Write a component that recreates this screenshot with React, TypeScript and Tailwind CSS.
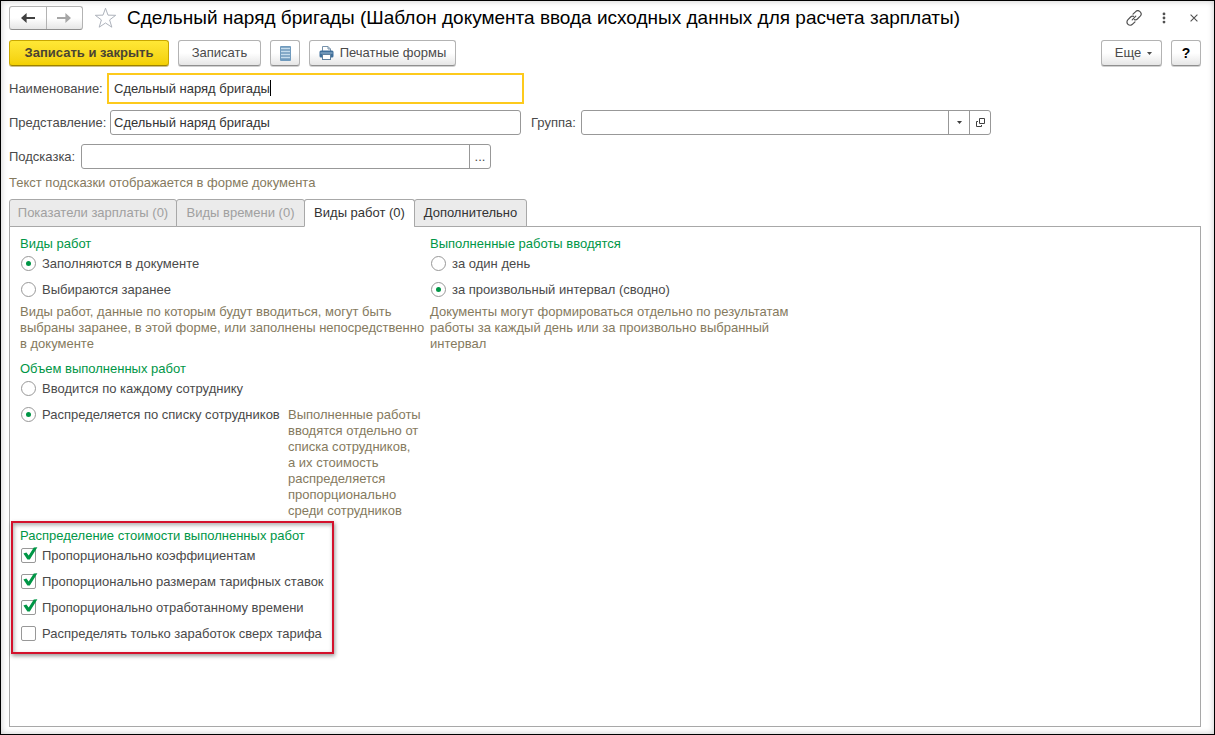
import { useState } from 'react'
import type { ReactNode } from 'react'
import clsx from 'clsx'

const buttonBase =
  'flex items-center justify-center rounded-[3px] border border-[#b3b3b3] border-b-[#8f8f8f] bg-linear-to-b from-white from-50% to-[#e6e6e6] shadow-[0_1px_0_#d0d0d0]'

interface ToolButtonProps {
  children: ReactNode
  className?: string
  label?: string
}

const ToolButton = ({ children, className, label }: ToolButtonProps) => (
  <button type="button" aria-label={label} className={clsx(buttonBase, 'h-[26px]', className)}>
    {children}
  </button>
)

interface ChoiceProps {
  label: string
  checked: boolean
  onChange: () => void
  name?: string
}

const RadioItem = ({ label, checked, onChange, name }: ChoiceProps) => (
  <label className="flex h-4 items-start gap-[6px] pl-px whitespace-nowrap">
    <span className="relative flex h-[15px] w-[15px] shrink-0">
      <input
        type="radio"
        name={name}
        checked={checked}
        onChange={onChange}
        className="h-[15px] w-[15px] appearance-none rounded-full border border-[#989898] bg-white"
      />
      {checked && <span className="pointer-events-none absolute inset-[5px] rounded-full bg-[#009646]" />}
    </span>
    {label}
  </label>
)

const CheckItem = ({ label, checked, onChange }: ChoiceProps) => (
  <label className="flex h-4 items-start gap-[6px] pl-px whitespace-nowrap">
    <span className="relative flex h-[15px] w-[15px] shrink-0">
      <input
        type="checkbox"
        checked={checked}
        onChange={onChange}
        className="h-[15px] w-[15px] appearance-none rounded-[2px] border border-[#989898] bg-white"
      />
      {checked && (
        <svg viewBox="0 0 17 16" className="pointer-events-none absolute -top-px left-0 h-4 w-[17px]">
          <path d="M2.4 6.6 L5.4 5.4 L7.7 8.6 L12.8 .6 L16.4 .2 L8.8 12.4 L6.4 12.4 Z" fill="#009646" />
        </svg>
      )}
    </span>
    {label}
  </label>
)

const GroupTitle = ({ children }: { children: ReactNode }) => (
  <legend className="mb-1 block h-4 whitespace-nowrap text-[#009646]">{children}</legend>
)

const tabs = [
  { id: 'salary', title: 'Показатели зарплаты (0)', width: 'w-[168px]', disabled: true },
  { id: 'time', title: 'Виды времени (0)', width: 'w-[129px]', disabled: true },
  { id: 'works', title: 'Виды работ (0)', width: 'w-[111px]', disabled: false },
  { id: 'extra', title: 'Дополнительно', width: 'w-[113px]', disabled: false },
]

const initialShares = [
  { label: 'Пропорционально коэффициентам', checked: true },
  { label: 'Пропорционально размерам тарифных ставок', checked: true },
  { label: 'Пропорционально отработанному времени', checked: true },
  { label: 'Распределять только заработок сверх тарифа', checked: false },
]

const App = () => {
  const [name, setName] = useState('Сдельный наряд бригады')
  const [view, setView] = useState('Сдельный наряд бригады')
  const [group, setGroup] = useState('')
  const [hint, setHint] = useState('')
  const [tab, setTab] = useState('works')
  const [source, setSource] = useState(0)
  const [period, setPeriod] = useState(1)
  const [volume, setVolume] = useState(1)
  const [shares, setShares] = useState(initialShares)

  const toggleShare = (index: number) => {
    setShares(shares.map((s, i) => (i === index ? { ...s, checked: !s.checked } : s)))
  }

  return (
    <div className="flex min-h-screen flex-col border border-black bg-white pt-[5px] pr-[13px] pb-[7px] pl-2 font-['Liberation_Sans',Arial,sans-serif] text-[13px] leading-4 text-[#4a4a4a] shadow-[inset_0_0_6px_#c8c8c8]">
      <header className="flex h-6 items-center">
        <div className="flex h-6 w-[74px] shrink-0 rounded-[3px] border border-[#b3b3b3] border-b-[#8f8f8f] bg-linear-to-b from-white from-50% to-[#e6e6e6]">
          <button type="button" aria-label="Назад" className="flex flex-1 items-center justify-center border-r border-[#b3b3b3]">
            <svg viewBox="0 0 14 10" className="h-[10px] w-[14px]">
              <path d="M0 5 L5.6 0 V3.9 H14 V6.1 H5.6 V10 Z" fill="#404040" />
            </svg>
          </button>
          <button type="button" aria-label="Вперед" className="flex flex-1 items-center justify-center">
            <svg viewBox="0 0 14 10" className="h-[10px] w-[14px]">
              <path d="M14 5 L8.4 0 V3.9 H0 V6.1 H8.4 V10 Z" fill="#a6a6a6" />
            </svg>
          </button>
        </div>
        <button type="button" aria-label="В избранное" className="ml-[11px]">
          <svg viewBox="0 0 24 24" className="h-6 w-[23px]" fill="none" stroke="#a9afb8" strokeWidth="1">
            <path d="M12 1.8 L14.6 9 L22.6 9.2 L16.3 14 L18.6 21.6 L12 17.2 L5.4 21.6 L7.7 14 L1.4 9.2 L9.4 9 Z" />
          </svg>
        </button>
        <h1 className="ml-[10px] flex-1 text-[19px] leading-6 whitespace-nowrap text-black">
          Сдельный наряд бригады (Шаблон документа ввода исходных данных для расчета зарплаты)
        </h1>
        <div className="flex items-center">
          <button type="button" aria-label="Ссылка">
            <svg viewBox="0 0 16 16" className="h-4 w-4" fill="none" stroke="#505050" strokeWidth="1.2" strokeLinecap="round">
              <path d="M7 4.2 L9.4 1.8 A2.9 2.9 0 0 1 14.2 6.2 L11.4 9 A2.9 2.9 0 0 1 8.4 9.6" />
              <path d="M9 11.8 L6.6 14.2 A2.9 2.9 0 0 1 1.8 9.8 L4.6 7 A2.9 2.9 0 0 1 7.6 6.4" />
              <path d="M6.2 9.8 L9.8 6.2" />
            </svg>
          </button>
          <button type="button" aria-label="Меню" className="ml-5">
            <svg viewBox="0 0 4 12" className="h-3 w-1" fill="#505050">
              <circle cx="2" cy="1.9" r="1.4" />
              <circle cx="2" cy="6" r="1.4" />
              <circle cx="2" cy="10.1" r="1.4" />
            </svg>
          </button>
          <button type="button" aria-label="Закрыть" className="mr-[3px] ml-6">
            <svg viewBox="0 0 8 8" className="h-2 w-2" stroke="#505050" strokeWidth="1.1">
              <path d="M.6 .6 L7.4 7.4 M7.4 .6 L.6 7.4" />
            </svg>
          </button>
        </div>
      </header>

      <div className="mt-[10px] flex items-start gap-[9px]">
        <button
          type="button"
          className="h-[26px] w-40 rounded-[3px] border border-[#c9a800] border-b-[#9c8200] bg-linear-to-b from-[#ffe835] to-[#f3d000] font-bold text-[#4a4433] shadow-[0_1px_0_#cfc08a]"
        >
          Записать и закрыть
        </button>
        <ToolButton className="w-[83px]">Записать</ToolButton>
        <ToolButton className="w-[30px]" label="Список">
          <svg viewBox="0 0 11 15" className="h-[15px] w-[11px]">
            <rect width="11" height="15" rx="1" fill="#6f9abd" />
            <path d="M1 2.5 H10 M1 5.5 H10 M1 8.5 H10 M1 11.5 H10" stroke="#c5dcec" strokeWidth="1.6" />
          </svg>
        </ToolButton>
        <ToolButton className="w-[147px] gap-[6px]">
          <svg viewBox="0 0 15 14" className="h-[14px] w-[15px]">
            <path d="M3.5 5 V.5 H9 L11.5 3 V5" fill="#fff" stroke="#7792ab" />
            <path d="M9 .5 V3 H11.5" fill="none" stroke="#7792ab" />
            <rect x=".5" y="4.5" width="14" height="7" rx="1.5" fill="#3f6f9b" />
            <path d="M1.5 7 H13.5" stroke="#9dbbd3" />
            <rect x="3.5" y="8.5" width="8" height="5" fill="#fff" stroke="#5d7f9e" />
          </svg>
          Печатные формы
        </ToolButton>
        <ToolButton className="ml-auto w-[61px] gap-[6px] pl-1">
          Еще
          <svg viewBox="0 0 5 3" className="h-[3px] w-[5px]">
            <path d="M0 0 H5 L2.5 3 Z" fill="#4a4a4a" />
          </svg>
        </ToolButton>
        <ToolButton className="w-[30px] text-[14px] font-bold text-black">?</ToolButton>
      </div>

      <div className="mt-[7px] flex items-center">
        <label htmlFor="name" className="w-[98px]">Наименование:</label>
        <div className="relative">
          <input
            id="name"
            value={name}
            onChange={(e) => setName(e.target.value)}
            className="h-[31px] w-[417px] border-2 border-[#fdca1c] bg-white pl-[5px] text-[#333] outline-none"
          />
          <span className="absolute top-[7px] left-[163px] h-4 w-px bg-black" />
        </div>
      </div>

      <div className="mt-[6px] flex items-center">
        <label htmlFor="view" className="w-[101px]">Представление:</label>
        <input
          id="view"
          value={view}
          onChange={(e) => setView(e.target.value)}
          className="h-[25px] w-[411px] rounded-[3px] border border-[#989898] bg-white pl-[3px] text-[#333] outline-none"
        />
        <label htmlFor="group" className="ml-[10px] w-[50px]">Группа:</label>
        <div className="flex h-[25px] w-[410px] rounded-[3px] border border-[#989898] bg-white">
          <input
            id="group"
            value={group}
            onChange={(e) => setGroup(e.target.value)}
            className="min-w-0 flex-1 pl-[3px] text-[#333] outline-none"
          />
          <button type="button" aria-label="Выбрать" className="flex w-[21px] items-center justify-center border-l border-[#989898]">
            <svg viewBox="0 0 5 3" className="h-[3px] w-[5px]">
              <path d="M0 0 H5 L2.5 3 Z" fill="#404040" />
            </svg>
          </button>
          <button type="button" aria-label="Открыть" className="flex w-[21px] items-center justify-center border-l border-[#989898]">
            <svg viewBox="0 0 9 9" className="h-[9px] w-[9px]" fill="none" stroke="#404040">
              <path d="M3.5 .5 H8.5 V5.5 H3.5 Z M2 3.5 H.5 V8.5 H5.5 V7" />
            </svg>
          </button>
        </div>
      </div>

      <div className="mt-[9px] flex items-center">
        <label htmlFor="hint" className="w-[72px]">Подсказка:</label>
        <div className="flex h-[25px] w-[410px] rounded-[3px] border border-[#989898] bg-white">
          <input
            id="hint"
            value={hint}
            onChange={(e) => setHint(e.target.value)}
            className="min-w-0 flex-1 pl-[3px] text-[#333] outline-none"
          />
          <button type="button" className="w-[21px] border-l border-[#989898]">...</button>
        </div>
      </div>

      <p className="mt-[6px] text-[#857a5e]">Текст подсказки отображается в форме документа</p>

      <div role="tablist" className="z-10 mt-2 flex h-7">
        {tabs.map((t) => (
          <button
            key={t.id}
            type="button"
            role="tab"
            aria-selected={tab === t.id}
            disabled={t.disabled}
            onClick={() => setTab(t.id)}
            className={clsx(
              '-mr-px rounded-t-[3px] border border-[#a8a8a8] whitespace-nowrap',
              t.width,
              tab === t.id ? 'border-b-white bg-white' : 'bg-[#ebebeb]',
              t.disabled ? 'text-[#a0a0a0]' : 'text-[#333]'
            )}
          >
            {t.title}
          </button>
        ))}
      </div>

      <main className="-mt-px flex-1 border border-[#a8a8a8] px-[10px] pt-[9px]">
        <div className="flex gap-[10px]">
          <fieldset className="w-[400px] min-w-0 shrink-0">
            <GroupTitle>Виды работ</GroupTitle>
            <div className="flex flex-col gap-[10px]">
              <RadioItem name="source" label="Заполняются в документе" checked={source === 0} onChange={() => setSource(0)} />
              <RadioItem name="source" label="Выбираются заранее" checked={source === 1} onChange={() => setSource(1)} />
            </div>
            <p className="mt-[6px] whitespace-nowrap text-[#857a5e]">
              Виды работ, данные по которым будут вводиться, могут быть<br />
              выбраны заранее, в этой форме, или заполнены непосредственно<br />
              в документе
            </p>
          </fieldset>
          <fieldset>
            <GroupTitle>Выполненные работы вводятся</GroupTitle>
            <div className="flex flex-col gap-[10px]">
              <RadioItem name="period" label="за один день" checked={period === 0} onChange={() => setPeriod(0)} />
              <RadioItem name="period" label="за произвольный интервал (сводно)" checked={period === 1} onChange={() => setPeriod(1)} />
            </div>
            <p className="mt-[6px] whitespace-nowrap text-[#857a5e]">
              Документы могут формироваться отдельно по результатам<br />
              работы за каждый день или за произвольно выбранный<br />
              интервал
            </p>
          </fieldset>
        </div>

        <fieldset className="mt-[9px]">
          <GroupTitle>Объем выполненных работ</GroupTitle>
          <RadioItem name="volume" label="Вводится по каждому сотруднику" checked={volume === 0} onChange={() => setVolume(0)} />
          <div className="mt-[10px] flex items-start">
            <div className="w-[268px]">
              <RadioItem name="volume" label="Распределяется по списку сотрудников" checked={volume === 1} onChange={() => setVolume(1)} />
            </div>
            <p className="whitespace-nowrap text-[#857a5e]">
              Выполненные работы<br />
              вводятся отдельно от<br />
              списка сотрудников,<br />
              а их стоимость<br />
              распределяется<br />
              пропорционально<br />
              среди сотрудников
            </p>
          </div>
        </fieldset>

        <section className="mt-[2px] -ml-[9px] w-[323px] border-2 border-[#d4112c] px-[7px] pt-[5px] pb-[10px] shadow-[1px_2px_4px_#00000066,inset_1px_2px_4px_#00000055]">
          <fieldset>
            <GroupTitle>Распределение стоимости выполненных работ</GroupTitle>
            <div className="flex flex-col gap-[10px]">
              {shares.map((s, i) => (
                <CheckItem key={s.label} label={s.label} checked={s.checked} onChange={() => toggleShare(i)} />
              ))}
            </div>
          </fieldset>
        </section>
      </main>
    </div>
  )
}

export default App
